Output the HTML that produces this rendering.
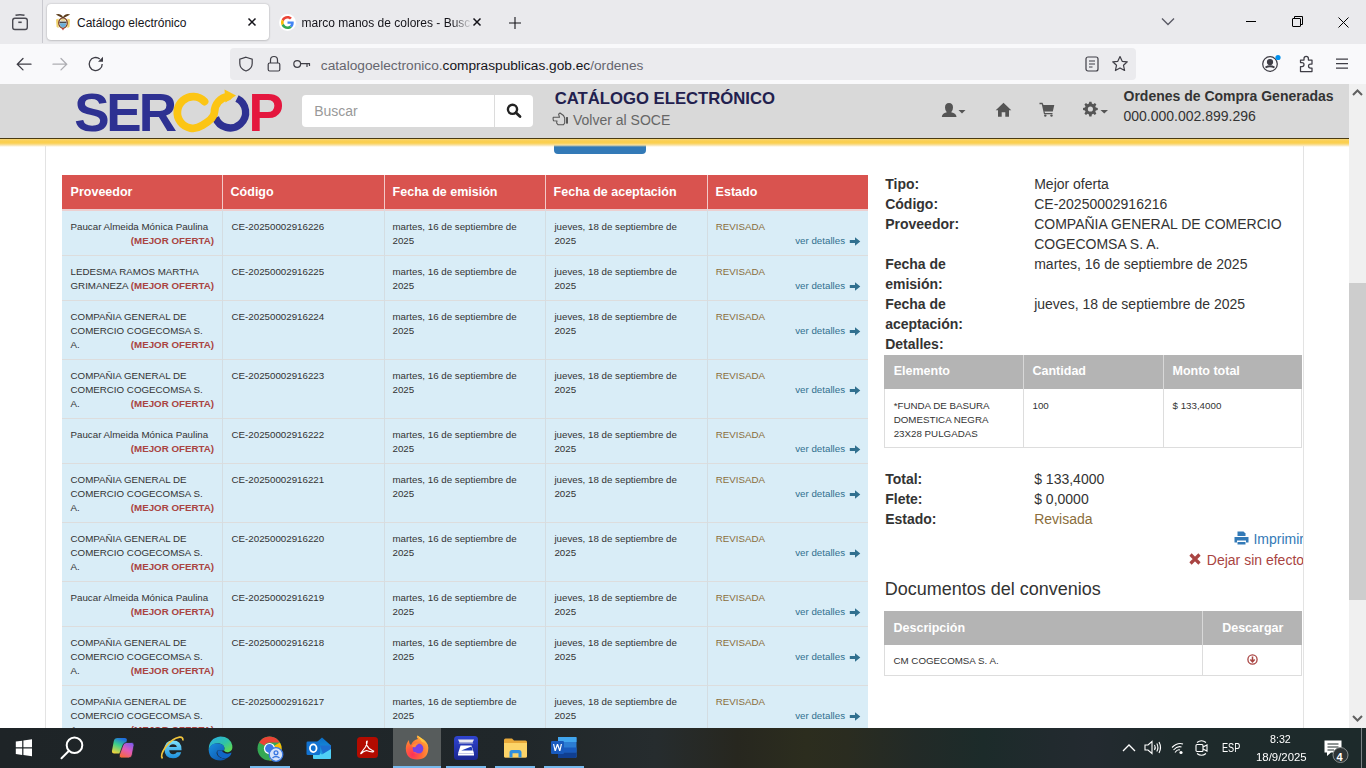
<!DOCTYPE html>
<html><head><meta charset="utf-8"><title>Catálogo electrónico</title>
<style>
html,body{margin:0;padding:0;width:1366px;height:768px;overflow:hidden;background:#fff;}
body{position:relative;font-family:"Liberation Sans",sans-serif;}
.t{position:absolute;white-space:nowrap;}
.r{position:absolute;}
.a{position:absolute;overflow:visible;}
</style></head><body>
<div class="r" style="left:0px;top:0px;width:1366px;height:44px;background:#eaeaed;"></div>
<div class="r" style="left:42px;top:0px;width:1px;height:43px;background:#c9c9cf;"></div>
<svg class="a" style="left:11px;top:13px" width="18" height="18" viewBox="0 0 18 18" fill="none" stroke="#4a4a52" stroke-width="1.4">
<path d="M4.5 2.3Q9 1.2 13.5 2.3"/><rect x="1.7" y="5.2" width="14.6" height="11.3" rx="2.2"/><path d="M7.3 9.3h3.4" stroke-width="1.6"/></svg>
<div class="r" style="left:47px;top:4px;width:222px;height:36px;background:#fff;border-radius:4px;box-shadow:0 0 2px rgba(0,0,0,.25),0 1px 2px rgba(0,0,0,.1);"></div>
<svg class="a" style="left:55px;top:13px" width="16" height="18" viewBox="55 13 16 18">
<path d="M56 19.5L58.6 18.5V28L56.6 27Z" fill="#f0d26a"/><path d="M70 19.5L67.4 18.5V28L69.4 27Z" fill="#f0d26a"/>
<ellipse cx="63" cy="23" rx="4.3" ry="5.2" fill="#f4f1e6" stroke="#7a3b1e" stroke-width="1.2"/>
<path d="M59.5 21.6H66.5V23.2H59.5Z" fill="#4a4a4a"/><path d="M59.6 23.2H66.4Q66 27.3 63 27.5Q60 27.3 59.6 23.2Z" fill="#6aaed8"/><path d="M61 19.2H65V20.6H61Z" fill="#e2cf7a"/>
<path d="M61.6 28L63 30.6L64.4 28Z" fill="#c0392b"/>
<path d="M55.8 14.6Q59.5 13.2 62.2 15.8L63 17.3L63.8 15.8Q66.5 13.2 70.2 14.6L66.5 16.6L63 18.3L59.5 16.6Z" fill="#5a3a1a"/></svg>
<div class="t " style="left:77.00px;top:15.04px;font-size:12px;line-height:16px;color:#15141a;font-weight:400;">Catálogo electrónico</div>
<svg class="a" style="left:247px;top:17px" width="10" height="10" viewBox="0 0 10 10" stroke="#15141a" stroke-width="1.5"><path d="M1.5 1.5L8.5 8.5M8.5 1.5L1.5 8.5"/></svg>
<div class="r" style="left:279px;top:14px;width:17px;height:17px;border-radius:50%;background:#fff"></div><svg class="a" style="left:281px;top:16px" width="13" height="13" viewBox="0 0 48 48">
<path fill="#EA4335" d="M24 9.5c3.54 0 6.71 1.22 9.21 3.6l6.85-6.85C35.9 2.38 30.47 0 24 0 14.62 0 6.51 5.38 2.56 13.22l7.98 6.19C12.43 13.72 17.74 9.5 24 9.5z"/>
<path fill="#4285F4" d="M46.98 24.55c0-1.57-.15-3.09-.38-4.55H24v9.02h12.94c-.58 2.96-2.26 5.48-4.78 7.18l7.73 6c4.51-4.18 7.09-10.36 7.09-17.65z"/>
<path fill="#FBBC05" d="M10.53 28.59c-.48-1.45-.76-2.99-.76-4.59s.27-3.14.76-4.59l-7.98-6.19C.92 16.46 0 20.12 0 24c0 3.88.92 7.54 2.56 10.78l7.97-6.19z"/>
<path fill="#34A853" d="M24 48c6.48 0 11.93-2.13 15.89-5.81l-7.73-6c-2.15 1.45-4.92 2.3-8.16 2.3-6.26 0-11.57-4.22-13.47-9.91l-7.98 6.19C6.51 42.62 14.62 48 24 48z"/></svg>
<div class="t " style="left:301.60px;top:15.04px;font-size:12px;line-height:16px;color:#15141a;font-weight:400;width:170px;overflow:hidden;-webkit-mask-image:linear-gradient(to right,#000 150px,transparent 170px);">marco manos de colores - Busca</div>
<svg class="a" style="left:472px;top:17px" width="10" height="10" viewBox="0 0 10 10" stroke="#15141a" stroke-width="1.5"><path d="M1.5 1.5L8.5 8.5M8.5 1.5L1.5 8.5"/></svg>
<svg class="a" style="left:508px;top:16px" width="14" height="14" viewBox="0 0 14 14" stroke="#15141a" stroke-width="1.1"><path d="M7 1V13M1 7H13"/></svg>
<svg class="a" style="left:1161px;top:17px" width="14" height="9" viewBox="0 0 14 9" fill="none" stroke="#5b5b66" stroke-width="1.4"><path d="M1 1.5L7 7.5L13 1.5"/></svg>
<div class="r" style="left:1246px;top:21px;width:10px;height:1px;background:#000;"></div>
<svg class="a" style="left:1292px;top:16px" width="11" height="11" viewBox="0 0 11 11" fill="none" stroke="#000" stroke-width="1"><rect x="0.5" y="2.5" width="8" height="8" rx="0.5"/><path d="M2.5 2.5V0.5H10.5V8.5H8.5"/></svg>
<svg class="a" style="left:1337.5px;top:16.5px" width="11" height="11" viewBox="0 0 11 11" fill="none" stroke="#000" stroke-width="1"><path d="M0.5 0.5L10.5 10.5M10.5 0.5L0.5 10.5"/></svg>
<div class="r" style="left:0px;top:44px;width:1366px;height:40px;background:#f9f9fb;"></div>
<svg class="a" style="left:16px;top:56px" width="16" height="16" viewBox="0 0 16 16" fill="none" stroke="#3f3e46" stroke-width="1.3" stroke-linecap="round"><path d="M15 8.2H2M7 2.5L1.3 8.2L7 13.9"/></svg>
<svg class="a" style="left:52px;top:56px" width="16" height="16" viewBox="0 0 16 16" fill="none" stroke="#aeaeb3" stroke-width="1.3" stroke-linecap="round"><path d="M1 8.2H14M9 2.5L14.7 8.2L9 13.9"/></svg>
<svg class="a" style="left:88px;top:56px" width="16" height="16" viewBox="0 0 16 16" fill="none" stroke="#3f3e46" stroke-width="1.3"><path d="M14.2 8A6.5 6.5 0 1 1 11.8 3"/><path d="M10 5.8L15 0.8V5.8Z" fill="#3f3e46" stroke="none"/></svg>
<div class="r" style="left:230px;top:48px;width:906px;height:32px;background:#ebebee;border-radius:4px;"></div>
<svg class="a" style="left:238px;top:56px" width="16" height="16" viewBox="0 0 16 16" fill="none" stroke="#3f3e46" stroke-width="1.2"><path d="M8 1.2L14.2 3.2V7.5C14.2 11 11.5 13.8 8 15C4.5 13.8 1.8 11 1.8 7.5V3.2Z"/></svg>
<svg class="a" style="left:266px;top:55px" width="16" height="17" viewBox="0 0 16 17" fill="none" stroke="#3f3e46" stroke-width="1.2"><path d="M4.5 8V5A3.5 3.5 0 0 1 11.5 5V8"/><rect x="2.2" y="8" width="11.6" height="8" rx="1.5"/></svg>
<svg class="a" style="left:293px;top:59px" width="18" height="10" viewBox="0 0 18 10" fill="none" stroke="#3f3e46" stroke-width="1.2"><circle cx="4.2" cy="5" r="3.4"/><path d="M7.6 4.6H17M14 4.6V8M16.5 4.6V7"/></svg>
<div class="t " style="left:320.80px;top:56.55px;font-size:13.7px;line-height:18px;color:#15141a;font-weight:400;"><span style="color:#66666e">catalogoelectronico.</span>compraspublicas.gob.ec<span style="color:#66666e">/ordenes</span></div>
<svg class="a" style="left:1085px;top:56px" width="14" height="16" viewBox="0 0 14 16" fill="none" stroke="#3f3e46" stroke-width="1.2"><rect x="1" y="1" width="12" height="14" rx="2"/><path d="M4 5H10M4 8H10M4 11H7.5"/></svg>
<svg class="a" style="left:1111px;top:55px" width="18" height="18" viewBox="0 0 18 18" fill="none" stroke="#3f3e46" stroke-width="1.2" stroke-linejoin="round"><path d="M9 1.5L11.2 6.3L16.3 6.8L12.5 10.3L13.6 15.5L9 12.9L4.4 15.5L5.5 10.3L1.7 6.8L6.8 6.3Z"/></svg>
<svg class="a" style="left:1261px;top:55px" width="20" height="18" viewBox="0 0 20 18" fill="none" stroke="#3f3e46" stroke-width="1.25"><circle cx="9" cy="9" r="7.3"/><circle cx="9" cy="7" r="2.5" fill="#3f3e46"/><path d="M4.5 12.5Q9 10 13.5 12.5" stroke-width="2"/><circle cx="17" cy="2.5" r="2.6" fill="#0090ed" stroke="none"/></svg>
<svg class="a" style="left:1299px;top:55px" width="16" height="18" viewBox="0 0 16 18" fill="none" stroke="#3f3e46" stroke-width="1.25" stroke-linejoin="round"><path d="M5 3.5A2.2 2.2 0 0 1 9.4 3.5V5H13V9H11.5A2 2 0 0 0 11.5 13H13V16.5H1.5V11.5H3A2 2 0 0 0 3 7.5H1.5V5H5Z"/></svg>
<svg class="a" style="left:1335px;top:57px" width="14" height="13" viewBox="0 0 14 13" stroke="#3f3e46" stroke-width="1.25"><path d="M1 2H13M1 6.5H13M1 11H13"/></svg>
<div class="r" style="left:0px;top:84px;width:1349px;height:644px;background:#fff;"></div>
<div class="r" style="left:1349px;top:84px;width:17px;height:644px;background:#f0f0f0;"></div>
<div class="r" style="left:1349px;top:283px;width:17px;height:317px;background:#cdcdcd;"></div>
<svg class="a" style="left:1352px;top:88px" width="11" height="9" viewBox="0 0 11 9" fill="none" stroke="#606060" stroke-width="2"><path d="M1 7L5.5 2.5L10 7"/></svg>
<svg class="a" style="left:1352px;top:714px" width="11" height="9" viewBox="0 0 11 9" fill="none" stroke="#606060" stroke-width="2"><path d="M1 2L5.5 6.5L10 2"/></svg>
<div class="r" style="left:45px;top:146px;width:1px;height:582px;background:#e3e3e3;"></div>
<div class="r" style="left:1303px;top:146px;width:1px;height:582px;background:#e3e3e3;"></div>
<div class="r" style="left:554px;top:130px;width:92px;height:24px;background:#337ab7;border-radius:0 0 4px 4px;"></div>
<div class="r" style="left:0px;top:84px;width:1349px;height:54px;background:#d9d9d9;"></div>
<div class="r" style="left:0px;top:138px;width:1349px;height:1px;background:#4a3b12;"></div>
<div class="r" style="left:0px;top:139px;width:1349px;height:8px;background:linear-gradient(#f6d57a 0px,#fbcf50 2px,#fbd050 4px,#f8e0a0 6px,rgba(255,255,255,0) 8px);"></div>
<svg class="a" style="left:70px;top:85px" width="220" height="50" viewBox="70 85 220 50">
<g font-family="Liberation Sans" font-weight="700" font-size="53">
<text x="74.3" y="131" fill="#2e3192">S</text>
<text x="106.2" y="131" fill="#2e3192">E</text>
<text x="138.8" y="131" fill="#2e3192">R</text>
<text x="248.5" y="131" fill="#e4173e">P</text>
</g>
<path d="M237 98.5 A15.5 15.5 0 1 1 215.5 117.5" fill="none" stroke="#2e3192" stroke-width="7.3"/>
<path d="M204.5 101.5 A15.8 15.8 0 1 0 201.9 125.6 C206.2 123.1 214.5 118 214.5 112 A15.5 15.5 0 0 1 228 96.6" fill="none" stroke="#fcc514" stroke-width="7.8" stroke-linecap="round"/>
<path d="M224.5 89.5 L236 95.5 L225.5 102.5 Z" fill="#fcc514"/>
</svg>
<div class="r" style="left:302px;top:95px;width:231px;height:32px;background:#fff;border-radius:4px;"></div>
<div class="r" style="left:494px;top:95px;width:1px;height:32px;background:#dcdcdc;"></div>
<div class="t " style="left:314.20px;top:101.85px;font-size:14px;line-height:18px;color:#999;font-weight:400;">Buscar</div>
<svg class="a" style="left:506px;top:103px" width="16" height="15" viewBox="0 0 16 15" fill="none" stroke="#222" stroke-width="2.4"><circle cx="6.5" cy="6.3" r="4.6"/><path d="M10 9.8L14 13.5" stroke-linecap="round" stroke-width="2.8"/></svg>
<div class="t " style="left:554.70px;top:87.71px;font-size:16.7px;line-height:22px;color:#22204e;font-weight:700;">CATÁLOGO ELECTRÓNICO</div>
<svg class="a" style="left:552px;top:112px" width="20" height="14" viewBox="0 0 20 14" fill="none" stroke="#555" stroke-width="1.1" stroke-linejoin="round"><path d="M1.2 5.3H7.5L6.6 2.2L8 1L11.5 3.5L12.7 6V11L11.5 12.7H6L4.6 11L5 9L1.5 8.7Q0.8 7 1.2 5.3Z"/><rect x="14" y="5.1" width="2" height="6.5" fill="#555" stroke="none"/></svg>
<div class="t " style="left:573.00px;top:111.15px;font-size:14px;line-height:18px;color:#666;font-weight:400;">Volver al SOCE</div>
<svg class="a" style="left:941px;top:102px" width="26" height="16" viewBox="0 0 26 16" fill="#555"><path d="M8 1Q12 1 12 5.5Q12 8.5 10.2 10.2Q15.5 11.5 15.5 15H0.8Q0.8 11.5 5.8 10.2Q4 8.5 4 5.5Q4 1 8 1Z"/><path d="M17.5 8H24.5L21 11.5Z"/></svg>
<svg class="a" style="left:995px;top:102px" width="17" height="15" viewBox="0 0 17 15" fill="#555"><path d="M8.5 0.8L16.3 8.2H14V14.7H10.3V10.3H6.7V14.7H3V8.2H0.7Z"/></svg>
<svg class="a" style="left:1039px;top:102px" width="16" height="15" viewBox="0 0 16 15" fill="#555"><path d="M0.5 0.8H3.5L4.5 3H15.3L13.8 9.5H5.5L6 11H13.5V12.3H5L2.8 2.2H0.5Z"/><circle cx="6.3" cy="13.6" r="1.2"/><circle cx="12.5" cy="13.6" r="1.2"/></svg>
<svg class="a" style="left:1083px;top:102px" width="26" height="15" viewBox="0 0 26 15" fill="#555"><path fill-rule="evenodd" d="M6.3 0.5H8.7L9.1 2.6L10.6 3.3L12.3 2L14 3.7L12.8 5.4L13.4 6.9L15.5 7.3V9.7L13.4 10.1L12.8 11.6L14 13.3L12.3 15L10.6 13.7L9.1 14.4L8.7 16.5H6.3L5.9 14.4L4.4 13.7L2.7 15L1 13.3L2.2 11.6L1.6 10.1L-0.5 9.7V7.3L1.6 6.9L2.2 5.4L1 3.7L2.7 2L4.4 3.3L5.9 2.6Z M7.5 5.7A2.8 2.8 0 1 0 7.5 11.3A2.8 2.8 0 1 0 7.5 5.7Z" transform="translate(0.5,-0.8) scale(0.92)"/><path d="M17.5 8H25L21.25 11.5Z"/></svg>
<div class="t " style="left:1123.50px;top:87.05px;font-size:14px;line-height:18px;color:#333;font-weight:700;">Ordenes de Compra Generadas</div>
<div class="t " style="left:1123.50px;top:106.65px;font-size:14px;line-height:18px;color:#333;font-weight:400;">000.000.002.899.296</div>
<div class="r" style="left:62px;top:175px;width:806px;height:34px;background:#d9534f;"></div>
<div class="r" style="left:222px;top:175px;width:1px;height:34px;background:#f3c9c8;"></div>
<div class="r" style="left:384px;top:175px;width:1px;height:34px;background:#f3c9c8;"></div>
<div class="r" style="left:545px;top:175px;width:1px;height:34px;background:#f3c9c8;"></div>
<div class="r" style="left:707px;top:175px;width:1px;height:34px;background:#f3c9c8;"></div>
<div class="t " style="left:70.60px;top:183.67px;font-size:12.5px;line-height:16px;color:#fff;font-weight:700;">Proveedor</div>
<div class="t " style="left:230.60px;top:183.67px;font-size:12.5px;line-height:16px;color:#fff;font-weight:700;">Código</div>
<div class="t " style="left:392.60px;top:183.67px;font-size:12.5px;line-height:16px;color:#fff;font-weight:700;">Fecha de emisión</div>
<div class="t " style="left:553.60px;top:183.67px;font-size:12.5px;line-height:16px;color:#fff;font-weight:700;">Fecha de aceptación</div>
<div class="t " style="left:715.60px;top:183.67px;font-size:12.5px;line-height:16px;color:#fff;font-weight:700;">Estado</div>
<div class="r" style="left:62px;top:209px;width:806px;height:46px;background:#d9edf7;"></div>
<div class="r" style="left:62px;top:209px;width:806px;height:2px;background:#eccfd0;"></div>
<div class="r" style="left:222px;top:209px;width:1px;height:46px;background:#d4dde2;"></div>
<div class="r" style="left:384px;top:209px;width:1px;height:46px;background:#d4dde2;"></div>
<div class="r" style="left:545px;top:209px;width:1px;height:46px;background:#d4dde2;"></div>
<div class="r" style="left:707px;top:209px;width:1px;height:46px;background:#d4dde2;"></div>
<div class="t " style="left:70.50px;top:220.22px;font-size:9.75px;line-height:14px;color:#333;font-weight:400;">Paucar Almeida Mónica Paulina</div>
<div class="t" style="left:70.5px;width:143.5px;text-align:right;top:233.80px;font-size:9.75px;line-height:14px"><span style="color:#a94442;font-weight:700">(MEJOR OFERTA)</span></div>
<div class="t " style="left:231.50px;top:220.22px;font-size:9.75px;line-height:14px;color:#333;font-weight:400;">CE-20250002916226</div>
<div class="t " style="left:392.50px;top:220.22px;font-size:9.75px;line-height:14px;color:#333;font-weight:400;">martes, 16 de septiembre de</div>
<div class="t " style="left:392.50px;top:234.22px;font-size:9.75px;line-height:14px;color:#333;font-weight:400;">2025</div>
<div class="t " style="left:554.40px;top:220.22px;font-size:9.75px;line-height:14px;color:#333;font-weight:400;">jueves, 18 de septiembre de</div>
<div class="t " style="left:554.40px;top:234.22px;font-size:9.75px;line-height:14px;color:#333;font-weight:400;">2025</div>
<div class="t " style="left:715.80px;top:220.22px;font-size:9.75px;line-height:14px;color:#8a6d3b;font-weight:400;">REVISADA</div>
<div class="t " style="left:795.20px;top:234.22px;font-size:9.75px;line-height:14px;color:#31708f;font-weight:400;">ver detalles</div>
<svg class="a" style="left:849px;top:237.10px" width="12" height="9" viewBox="0 0 12 9" fill="#31708f"><path d="M0.8 3H6V0.3L11.3 4.5L6 8.7V6H0.8Z"/></svg>
<div class="r" style="left:62px;top:255px;width:806px;height:45px;background:#d9edf7;"></div>
<div class="r" style="left:62px;top:255px;width:806px;height:1px;background:#dddddd;"></div>
<div class="r" style="left:222px;top:255px;width:1px;height:45px;background:#d4dde2;"></div>
<div class="r" style="left:384px;top:255px;width:1px;height:45px;background:#d4dde2;"></div>
<div class="r" style="left:545px;top:255px;width:1px;height:45px;background:#d4dde2;"></div>
<div class="r" style="left:707px;top:255px;width:1px;height:45px;background:#d4dde2;"></div>
<div class="t " style="left:70.50px;top:265.22px;font-size:9.75px;line-height:14px;color:#333;font-weight:400;">LEDESMA RAMOS MARTHA</div>
<div class="t " style="left:70.50px;top:279.22px;font-size:9.75px;line-height:14px;color:#333;font-weight:400;">GRIMANEZA</div>
<div class="t" style="left:70.5px;width:143.5px;text-align:right;top:278.80px;font-size:9.75px;line-height:14px"><span style="color:#a94442;font-weight:700">(MEJOR OFERTA)</span></div>
<div class="t " style="left:231.50px;top:265.22px;font-size:9.75px;line-height:14px;color:#333;font-weight:400;">CE-20250002916225</div>
<div class="t " style="left:392.50px;top:265.22px;font-size:9.75px;line-height:14px;color:#333;font-weight:400;">martes, 16 de septiembre de</div>
<div class="t " style="left:392.50px;top:279.22px;font-size:9.75px;line-height:14px;color:#333;font-weight:400;">2025</div>
<div class="t " style="left:554.40px;top:265.22px;font-size:9.75px;line-height:14px;color:#333;font-weight:400;">jueves, 18 de septiembre de</div>
<div class="t " style="left:554.40px;top:279.22px;font-size:9.75px;line-height:14px;color:#333;font-weight:400;">2025</div>
<div class="t " style="left:715.80px;top:265.22px;font-size:9.75px;line-height:14px;color:#8a6d3b;font-weight:400;">REVISADA</div>
<div class="t " style="left:795.20px;top:279.22px;font-size:9.75px;line-height:14px;color:#31708f;font-weight:400;">ver detalles</div>
<svg class="a" style="left:849px;top:282.10px" width="12" height="9" viewBox="0 0 12 9" fill="#31708f"><path d="M0.8 3H6V0.3L11.3 4.5L6 8.7V6H0.8Z"/></svg>
<div class="r" style="left:62px;top:300px;width:806px;height:59px;background:#d9edf7;"></div>
<div class="r" style="left:62px;top:300px;width:806px;height:1px;background:#dddddd;"></div>
<div class="r" style="left:222px;top:300px;width:1px;height:59px;background:#d4dde2;"></div>
<div class="r" style="left:384px;top:300px;width:1px;height:59px;background:#d4dde2;"></div>
<div class="r" style="left:545px;top:300px;width:1px;height:59px;background:#d4dde2;"></div>
<div class="r" style="left:707px;top:300px;width:1px;height:59px;background:#d4dde2;"></div>
<div class="t " style="left:70.50px;top:310.22px;font-size:9.75px;line-height:14px;color:#333;font-weight:400;">COMPAÑIA GENERAL DE</div>
<div class="t " style="left:70.50px;top:324.22px;font-size:9.75px;line-height:14px;color:#333;font-weight:400;">COMERCIO COGECOMSA S.</div>
<div class="t " style="left:70.50px;top:338.22px;font-size:9.75px;line-height:14px;color:#333;font-weight:400;">A.</div>
<div class="t" style="left:70.5px;width:143.5px;text-align:right;top:337.80px;font-size:9.75px;line-height:14px"><span style="color:#a94442;font-weight:700">(MEJOR OFERTA)</span></div>
<div class="t " style="left:231.50px;top:310.22px;font-size:9.75px;line-height:14px;color:#333;font-weight:400;">CE-20250002916224</div>
<div class="t " style="left:392.50px;top:310.22px;font-size:9.75px;line-height:14px;color:#333;font-weight:400;">martes, 16 de septiembre de</div>
<div class="t " style="left:392.50px;top:324.22px;font-size:9.75px;line-height:14px;color:#333;font-weight:400;">2025</div>
<div class="t " style="left:554.40px;top:310.22px;font-size:9.75px;line-height:14px;color:#333;font-weight:400;">jueves, 18 de septiembre de</div>
<div class="t " style="left:554.40px;top:324.22px;font-size:9.75px;line-height:14px;color:#333;font-weight:400;">2025</div>
<div class="t " style="left:715.80px;top:310.22px;font-size:9.75px;line-height:14px;color:#8a6d3b;font-weight:400;">REVISADA</div>
<div class="t " style="left:795.20px;top:324.22px;font-size:9.75px;line-height:14px;color:#31708f;font-weight:400;">ver detalles</div>
<svg class="a" style="left:849px;top:327.10px" width="12" height="9" viewBox="0 0 12 9" fill="#31708f"><path d="M0.8 3H6V0.3L11.3 4.5L6 8.7V6H0.8Z"/></svg>
<div class="r" style="left:62px;top:359px;width:806px;height:59px;background:#d9edf7;"></div>
<div class="r" style="left:62px;top:359px;width:806px;height:1px;background:#dddddd;"></div>
<div class="r" style="left:222px;top:359px;width:1px;height:59px;background:#d4dde2;"></div>
<div class="r" style="left:384px;top:359px;width:1px;height:59px;background:#d4dde2;"></div>
<div class="r" style="left:545px;top:359px;width:1px;height:59px;background:#d4dde2;"></div>
<div class="r" style="left:707px;top:359px;width:1px;height:59px;background:#d4dde2;"></div>
<div class="t " style="left:70.50px;top:369.22px;font-size:9.75px;line-height:14px;color:#333;font-weight:400;">COMPAÑIA GENERAL DE</div>
<div class="t " style="left:70.50px;top:383.22px;font-size:9.75px;line-height:14px;color:#333;font-weight:400;">COMERCIO COGECOMSA S.</div>
<div class="t " style="left:70.50px;top:397.22px;font-size:9.75px;line-height:14px;color:#333;font-weight:400;">A.</div>
<div class="t" style="left:70.5px;width:143.5px;text-align:right;top:396.80px;font-size:9.75px;line-height:14px"><span style="color:#a94442;font-weight:700">(MEJOR OFERTA)</span></div>
<div class="t " style="left:231.50px;top:369.22px;font-size:9.75px;line-height:14px;color:#333;font-weight:400;">CE-20250002916223</div>
<div class="t " style="left:392.50px;top:369.22px;font-size:9.75px;line-height:14px;color:#333;font-weight:400;">martes, 16 de septiembre de</div>
<div class="t " style="left:392.50px;top:383.22px;font-size:9.75px;line-height:14px;color:#333;font-weight:400;">2025</div>
<div class="t " style="left:554.40px;top:369.22px;font-size:9.75px;line-height:14px;color:#333;font-weight:400;">jueves, 18 de septiembre de</div>
<div class="t " style="left:554.40px;top:383.22px;font-size:9.75px;line-height:14px;color:#333;font-weight:400;">2025</div>
<div class="t " style="left:715.80px;top:369.22px;font-size:9.75px;line-height:14px;color:#8a6d3b;font-weight:400;">REVISADA</div>
<div class="t " style="left:795.20px;top:383.22px;font-size:9.75px;line-height:14px;color:#31708f;font-weight:400;">ver detalles</div>
<svg class="a" style="left:849px;top:386.10px" width="12" height="9" viewBox="0 0 12 9" fill="#31708f"><path d="M0.8 3H6V0.3L11.3 4.5L6 8.7V6H0.8Z"/></svg>
<div class="r" style="left:62px;top:418px;width:806px;height:45px;background:#d9edf7;"></div>
<div class="r" style="left:62px;top:418px;width:806px;height:1px;background:#dddddd;"></div>
<div class="r" style="left:222px;top:418px;width:1px;height:45px;background:#d4dde2;"></div>
<div class="r" style="left:384px;top:418px;width:1px;height:45px;background:#d4dde2;"></div>
<div class="r" style="left:545px;top:418px;width:1px;height:45px;background:#d4dde2;"></div>
<div class="r" style="left:707px;top:418px;width:1px;height:45px;background:#d4dde2;"></div>
<div class="t " style="left:70.50px;top:428.22px;font-size:9.75px;line-height:14px;color:#333;font-weight:400;">Paucar Almeida Mónica Paulina</div>
<div class="t" style="left:70.5px;width:143.5px;text-align:right;top:441.80px;font-size:9.75px;line-height:14px"><span style="color:#a94442;font-weight:700">(MEJOR OFERTA)</span></div>
<div class="t " style="left:231.50px;top:428.22px;font-size:9.75px;line-height:14px;color:#333;font-weight:400;">CE-20250002916222</div>
<div class="t " style="left:392.50px;top:428.22px;font-size:9.75px;line-height:14px;color:#333;font-weight:400;">martes, 16 de septiembre de</div>
<div class="t " style="left:392.50px;top:442.22px;font-size:9.75px;line-height:14px;color:#333;font-weight:400;">2025</div>
<div class="t " style="left:554.40px;top:428.22px;font-size:9.75px;line-height:14px;color:#333;font-weight:400;">jueves, 18 de septiembre de</div>
<div class="t " style="left:554.40px;top:442.22px;font-size:9.75px;line-height:14px;color:#333;font-weight:400;">2025</div>
<div class="t " style="left:715.80px;top:428.22px;font-size:9.75px;line-height:14px;color:#8a6d3b;font-weight:400;">REVISADA</div>
<div class="t " style="left:795.20px;top:442.22px;font-size:9.75px;line-height:14px;color:#31708f;font-weight:400;">ver detalles</div>
<svg class="a" style="left:849px;top:445.10px" width="12" height="9" viewBox="0 0 12 9" fill="#31708f"><path d="M0.8 3H6V0.3L11.3 4.5L6 8.7V6H0.8Z"/></svg>
<div class="r" style="left:62px;top:463px;width:806px;height:59px;background:#d9edf7;"></div>
<div class="r" style="left:62px;top:463px;width:806px;height:1px;background:#dddddd;"></div>
<div class="r" style="left:222px;top:463px;width:1px;height:59px;background:#d4dde2;"></div>
<div class="r" style="left:384px;top:463px;width:1px;height:59px;background:#d4dde2;"></div>
<div class="r" style="left:545px;top:463px;width:1px;height:59px;background:#d4dde2;"></div>
<div class="r" style="left:707px;top:463px;width:1px;height:59px;background:#d4dde2;"></div>
<div class="t " style="left:70.50px;top:473.22px;font-size:9.75px;line-height:14px;color:#333;font-weight:400;">COMPAÑIA GENERAL DE</div>
<div class="t " style="left:70.50px;top:487.22px;font-size:9.75px;line-height:14px;color:#333;font-weight:400;">COMERCIO COGECOMSA S.</div>
<div class="t " style="left:70.50px;top:501.22px;font-size:9.75px;line-height:14px;color:#333;font-weight:400;">A.</div>
<div class="t" style="left:70.5px;width:143.5px;text-align:right;top:500.80px;font-size:9.75px;line-height:14px"><span style="color:#a94442;font-weight:700">(MEJOR OFERTA)</span></div>
<div class="t " style="left:231.50px;top:473.22px;font-size:9.75px;line-height:14px;color:#333;font-weight:400;">CE-20250002916221</div>
<div class="t " style="left:392.50px;top:473.22px;font-size:9.75px;line-height:14px;color:#333;font-weight:400;">martes, 16 de septiembre de</div>
<div class="t " style="left:392.50px;top:487.22px;font-size:9.75px;line-height:14px;color:#333;font-weight:400;">2025</div>
<div class="t " style="left:554.40px;top:473.22px;font-size:9.75px;line-height:14px;color:#333;font-weight:400;">jueves, 18 de septiembre de</div>
<div class="t " style="left:554.40px;top:487.22px;font-size:9.75px;line-height:14px;color:#333;font-weight:400;">2025</div>
<div class="t " style="left:715.80px;top:473.22px;font-size:9.75px;line-height:14px;color:#8a6d3b;font-weight:400;">REVISADA</div>
<div class="t " style="left:795.20px;top:487.22px;font-size:9.75px;line-height:14px;color:#31708f;font-weight:400;">ver detalles</div>
<svg class="a" style="left:849px;top:490.10px" width="12" height="9" viewBox="0 0 12 9" fill="#31708f"><path d="M0.8 3H6V0.3L11.3 4.5L6 8.7V6H0.8Z"/></svg>
<div class="r" style="left:62px;top:522px;width:806px;height:59px;background:#d9edf7;"></div>
<div class="r" style="left:62px;top:522px;width:806px;height:1px;background:#dddddd;"></div>
<div class="r" style="left:222px;top:522px;width:1px;height:59px;background:#d4dde2;"></div>
<div class="r" style="left:384px;top:522px;width:1px;height:59px;background:#d4dde2;"></div>
<div class="r" style="left:545px;top:522px;width:1px;height:59px;background:#d4dde2;"></div>
<div class="r" style="left:707px;top:522px;width:1px;height:59px;background:#d4dde2;"></div>
<div class="t " style="left:70.50px;top:532.22px;font-size:9.75px;line-height:14px;color:#333;font-weight:400;">COMPAÑIA GENERAL DE</div>
<div class="t " style="left:70.50px;top:546.22px;font-size:9.75px;line-height:14px;color:#333;font-weight:400;">COMERCIO COGECOMSA S.</div>
<div class="t " style="left:70.50px;top:560.22px;font-size:9.75px;line-height:14px;color:#333;font-weight:400;">A.</div>
<div class="t" style="left:70.5px;width:143.5px;text-align:right;top:559.80px;font-size:9.75px;line-height:14px"><span style="color:#a94442;font-weight:700">(MEJOR OFERTA)</span></div>
<div class="t " style="left:231.50px;top:532.22px;font-size:9.75px;line-height:14px;color:#333;font-weight:400;">CE-20250002916220</div>
<div class="t " style="left:392.50px;top:532.22px;font-size:9.75px;line-height:14px;color:#333;font-weight:400;">martes, 16 de septiembre de</div>
<div class="t " style="left:392.50px;top:546.22px;font-size:9.75px;line-height:14px;color:#333;font-weight:400;">2025</div>
<div class="t " style="left:554.40px;top:532.22px;font-size:9.75px;line-height:14px;color:#333;font-weight:400;">jueves, 18 de septiembre de</div>
<div class="t " style="left:554.40px;top:546.22px;font-size:9.75px;line-height:14px;color:#333;font-weight:400;">2025</div>
<div class="t " style="left:715.80px;top:532.22px;font-size:9.75px;line-height:14px;color:#8a6d3b;font-weight:400;">REVISADA</div>
<div class="t " style="left:795.20px;top:546.22px;font-size:9.75px;line-height:14px;color:#31708f;font-weight:400;">ver detalles</div>
<svg class="a" style="left:849px;top:549.10px" width="12" height="9" viewBox="0 0 12 9" fill="#31708f"><path d="M0.8 3H6V0.3L11.3 4.5L6 8.7V6H0.8Z"/></svg>
<div class="r" style="left:62px;top:581px;width:806px;height:45px;background:#d9edf7;"></div>
<div class="r" style="left:62px;top:581px;width:806px;height:1px;background:#dddddd;"></div>
<div class="r" style="left:222px;top:581px;width:1px;height:45px;background:#d4dde2;"></div>
<div class="r" style="left:384px;top:581px;width:1px;height:45px;background:#d4dde2;"></div>
<div class="r" style="left:545px;top:581px;width:1px;height:45px;background:#d4dde2;"></div>
<div class="r" style="left:707px;top:581px;width:1px;height:45px;background:#d4dde2;"></div>
<div class="t " style="left:70.50px;top:591.22px;font-size:9.75px;line-height:14px;color:#333;font-weight:400;">Paucar Almeida Mónica Paulina</div>
<div class="t" style="left:70.5px;width:143.5px;text-align:right;top:604.80px;font-size:9.75px;line-height:14px"><span style="color:#a94442;font-weight:700">(MEJOR OFERTA)</span></div>
<div class="t " style="left:231.50px;top:591.22px;font-size:9.75px;line-height:14px;color:#333;font-weight:400;">CE-20250002916219</div>
<div class="t " style="left:392.50px;top:591.22px;font-size:9.75px;line-height:14px;color:#333;font-weight:400;">martes, 16 de septiembre de</div>
<div class="t " style="left:392.50px;top:605.22px;font-size:9.75px;line-height:14px;color:#333;font-weight:400;">2025</div>
<div class="t " style="left:554.40px;top:591.22px;font-size:9.75px;line-height:14px;color:#333;font-weight:400;">jueves, 18 de septiembre de</div>
<div class="t " style="left:554.40px;top:605.22px;font-size:9.75px;line-height:14px;color:#333;font-weight:400;">2025</div>
<div class="t " style="left:715.80px;top:591.22px;font-size:9.75px;line-height:14px;color:#8a6d3b;font-weight:400;">REVISADA</div>
<div class="t " style="left:795.20px;top:605.22px;font-size:9.75px;line-height:14px;color:#31708f;font-weight:400;">ver detalles</div>
<svg class="a" style="left:849px;top:608.10px" width="12" height="9" viewBox="0 0 12 9" fill="#31708f"><path d="M0.8 3H6V0.3L11.3 4.5L6 8.7V6H0.8Z"/></svg>
<div class="r" style="left:62px;top:626px;width:806px;height:59px;background:#d9edf7;"></div>
<div class="r" style="left:62px;top:626px;width:806px;height:1px;background:#dddddd;"></div>
<div class="r" style="left:222px;top:626px;width:1px;height:59px;background:#d4dde2;"></div>
<div class="r" style="left:384px;top:626px;width:1px;height:59px;background:#d4dde2;"></div>
<div class="r" style="left:545px;top:626px;width:1px;height:59px;background:#d4dde2;"></div>
<div class="r" style="left:707px;top:626px;width:1px;height:59px;background:#d4dde2;"></div>
<div class="t " style="left:70.50px;top:636.22px;font-size:9.75px;line-height:14px;color:#333;font-weight:400;">COMPAÑIA GENERAL DE</div>
<div class="t " style="left:70.50px;top:650.22px;font-size:9.75px;line-height:14px;color:#333;font-weight:400;">COMERCIO COGECOMSA S.</div>
<div class="t " style="left:70.50px;top:664.22px;font-size:9.75px;line-height:14px;color:#333;font-weight:400;">A.</div>
<div class="t" style="left:70.5px;width:143.5px;text-align:right;top:663.80px;font-size:9.75px;line-height:14px"><span style="color:#a94442;font-weight:700">(MEJOR OFERTA)</span></div>
<div class="t " style="left:231.50px;top:636.22px;font-size:9.75px;line-height:14px;color:#333;font-weight:400;">CE-20250002916218</div>
<div class="t " style="left:392.50px;top:636.22px;font-size:9.75px;line-height:14px;color:#333;font-weight:400;">martes, 16 de septiembre de</div>
<div class="t " style="left:392.50px;top:650.22px;font-size:9.75px;line-height:14px;color:#333;font-weight:400;">2025</div>
<div class="t " style="left:554.40px;top:636.22px;font-size:9.75px;line-height:14px;color:#333;font-weight:400;">jueves, 18 de septiembre de</div>
<div class="t " style="left:554.40px;top:650.22px;font-size:9.75px;line-height:14px;color:#333;font-weight:400;">2025</div>
<div class="t " style="left:715.80px;top:636.22px;font-size:9.75px;line-height:14px;color:#8a6d3b;font-weight:400;">REVISADA</div>
<div class="t " style="left:795.20px;top:650.22px;font-size:9.75px;line-height:14px;color:#31708f;font-weight:400;">ver detalles</div>
<svg class="a" style="left:849px;top:653.10px" width="12" height="9" viewBox="0 0 12 9" fill="#31708f"><path d="M0.8 3H6V0.3L11.3 4.5L6 8.7V6H0.8Z"/></svg>
<div class="r" style="left:62px;top:685px;width:806px;height:59px;background:#d9edf7;"></div>
<div class="r" style="left:62px;top:685px;width:806px;height:1px;background:#dddddd;"></div>
<div class="r" style="left:222px;top:685px;width:1px;height:59px;background:#d4dde2;"></div>
<div class="r" style="left:384px;top:685px;width:1px;height:59px;background:#d4dde2;"></div>
<div class="r" style="left:545px;top:685px;width:1px;height:59px;background:#d4dde2;"></div>
<div class="r" style="left:707px;top:685px;width:1px;height:59px;background:#d4dde2;"></div>
<div class="t " style="left:70.50px;top:695.22px;font-size:9.75px;line-height:14px;color:#333;font-weight:400;">COMPAÑIA GENERAL DE</div>
<div class="t " style="left:70.50px;top:709.22px;font-size:9.75px;line-height:14px;color:#333;font-weight:400;">COMERCIO COGECOMSA S.</div>
<div class="t " style="left:70.50px;top:723.22px;font-size:9.75px;line-height:14px;color:#333;font-weight:400;">A.</div>
<div class="t" style="left:70.5px;width:143.5px;text-align:right;top:722.80px;font-size:9.75px;line-height:14px"><span style="color:#a94442;font-weight:700">(MEJOR OFERTA)</span></div>
<div class="t " style="left:231.50px;top:695.22px;font-size:9.75px;line-height:14px;color:#333;font-weight:400;">CE-20250002916217</div>
<div class="t " style="left:392.50px;top:695.22px;font-size:9.75px;line-height:14px;color:#333;font-weight:400;">martes, 16 de septiembre de</div>
<div class="t " style="left:392.50px;top:709.22px;font-size:9.75px;line-height:14px;color:#333;font-weight:400;">2025</div>
<div class="t " style="left:554.40px;top:695.22px;font-size:9.75px;line-height:14px;color:#333;font-weight:400;">jueves, 18 de septiembre de</div>
<div class="t " style="left:554.40px;top:709.22px;font-size:9.75px;line-height:14px;color:#333;font-weight:400;">2025</div>
<div class="t " style="left:715.80px;top:695.22px;font-size:9.75px;line-height:14px;color:#8a6d3b;font-weight:400;">REVISADA</div>
<div class="t " style="left:795.20px;top:709.22px;font-size:9.75px;line-height:14px;color:#31708f;font-weight:400;">ver detalles</div>
<svg class="a" style="left:849px;top:712.10px" width="12" height="9" viewBox="0 0 12 9" fill="#31708f"><path d="M0.8 3H6V0.3L11.3 4.5L6 8.7V6H0.8Z"/></svg>
<div class="t " style="left:885.20px;top:175.15px;font-size:14px;line-height:18px;color:#333;font-weight:700;">Tipo:</div>
<div class="t " style="left:885.20px;top:195.15px;font-size:14px;line-height:18px;color:#333;font-weight:700;">Código:</div>
<div class="t " style="left:885.20px;top:215.15px;font-size:14px;line-height:18px;color:#333;font-weight:700;">Proveedor:</div>
<div class="t " style="left:885.20px;top:255.15px;font-size:14px;line-height:18px;color:#333;font-weight:700;">Fecha de</div>
<div class="t " style="left:885.20px;top:275.15px;font-size:14px;line-height:18px;color:#333;font-weight:700;">emisión:</div>
<div class="t " style="left:885.20px;top:295.15px;font-size:14px;line-height:18px;color:#333;font-weight:700;">Fecha de</div>
<div class="t " style="left:885.20px;top:315.15px;font-size:14px;line-height:18px;color:#333;font-weight:700;">aceptación:</div>
<div class="t " style="left:885.20px;top:335.15px;font-size:14px;line-height:18px;color:#333;font-weight:700;">Detalles:</div>
<div class="t " style="left:1034.20px;top:175.15px;font-size:14px;line-height:18px;color:#333;font-weight:400;">Mejor oferta</div>
<div class="t " style="left:1034.20px;top:195.15px;font-size:14px;line-height:18px;color:#333;font-weight:400;">CE-20250002916216</div>
<div class="t " style="left:1034.20px;top:215.15px;font-size:14px;line-height:18px;color:#333;font-weight:400;">COMPAÑIA GENERAL DE COMERCIO</div>
<div class="t " style="left:1034.20px;top:235.15px;font-size:14px;line-height:18px;color:#333;font-weight:400;">COGECOMSA S. A.</div>
<div class="t " style="left:1034.20px;top:255.15px;font-size:14px;line-height:18px;color:#333;font-weight:400;">martes, 16 de septiembre de 2025</div>
<div class="t " style="left:1034.20px;top:295.15px;font-size:14px;line-height:18px;color:#333;font-weight:400;">jueves, 18 de septiembre de 2025</div>
<div class="r" style="left:884px;top:355px;width:418px;height:34px;background:#b4b4b4;"></div>
<div class="r" style="left:1023px;top:355px;width:1px;height:34px;background:#d8d8d8;"></div>
<div class="r" style="left:1163px;top:355px;width:1px;height:34px;background:#d8d8d8;"></div>
<div class="r" style="left:884px;top:389px;width:418px;height:59px;background:#fff;box-sizing:border-box;border:1px solid #dddddd;border-top:0;"></div>
<div class="r" style="left:1023px;top:389px;width:1px;height:59px;background:#dddddd;"></div>
<div class="r" style="left:1163px;top:389px;width:1px;height:59px;background:#dddddd;"></div>
<div class="t " style="left:893.70px;top:363.37px;font-size:12.5px;line-height:16px;color:#fff;font-weight:700;">Elemento</div>
<div class="t " style="left:1032.50px;top:363.37px;font-size:12.5px;line-height:16px;color:#fff;font-weight:700;">Cantidad</div>
<div class="t " style="left:1172.50px;top:363.37px;font-size:12.5px;line-height:16px;color:#fff;font-weight:700;">Monto total</div>
<div class="t " style="left:893.70px;top:398.62px;font-size:9.75px;line-height:14px;color:#333;font-weight:400;">*FUNDA DE BASURA</div>
<div class="t " style="left:893.70px;top:412.62px;font-size:9.75px;line-height:14px;color:#333;font-weight:400;">DOMESTICA NEGRA</div>
<div class="t " style="left:893.70px;top:426.62px;font-size:9.75px;line-height:14px;color:#333;font-weight:400;">23X28 PULGADAS</div>
<div class="t " style="left:1032.50px;top:398.62px;font-size:9.75px;line-height:14px;color:#333;font-weight:400;">100</div>
<div class="t " style="left:1172.50px;top:398.62px;font-size:9.75px;line-height:14px;color:#333;font-weight:400;">$ 133,4000</div>
<div class="t " style="left:885.20px;top:470.15px;font-size:14px;line-height:18px;color:#333;font-weight:700;">Total:</div>
<div class="t " style="left:885.20px;top:490.15px;font-size:14px;line-height:18px;color:#333;font-weight:700;">Flete:</div>
<div class="t " style="left:885.20px;top:510.15px;font-size:14px;line-height:18px;color:#333;font-weight:700;">Estado:</div>
<div class="t " style="left:1034.20px;top:470.15px;font-size:14px;line-height:18px;color:#333;font-weight:400;">$ 133,4000</div>
<div class="t " style="left:1034.20px;top:490.15px;font-size:14px;line-height:18px;color:#333;font-weight:400;">$ 0,0000</div>
<div class="t " style="left:1034.20px;top:510.15px;font-size:14px;line-height:18px;color:#8a6d3b;font-weight:400;">Revisada</div>
<svg class="a" style="left:1234px;top:531px" width="15" height="14" viewBox="0 0 15 14" fill="#337ab7"><path d="M3.5 0.5H9.5L11.5 2.5V5H3.5Z"/><path d="M0.5 6H14.5V11.5H12V9.5H3V11.5H0.5Z"/><rect x="3.5" y="11" width="8" height="2.5"/></svg>
<div class="t " style="left:1253.40px;top:530.15px;font-size:14px;line-height:18px;color:#337ab7;font-weight:400;width:49.6px;overflow:hidden;">Imprimir</div>
<svg class="a" style="left:1189px;top:553px" width="12" height="12" viewBox="0 0 12 12" stroke="#a94442" stroke-width="3.2"><path d="M1.5 1.5L10.5 10.5M10.5 1.5L1.5 10.5"/></svg>
<div class="t " style="left:1206.80px;top:550.75px;font-size:14px;line-height:18px;color:#a94442;font-weight:400;width:96.2px;overflow:hidden;">Dejar sin efecto</div>
<div class="t " style="left:884.70px;top:578.26px;font-size:18px;line-height:23px;color:#333;font-weight:400;">Documentos del convenios</div>
<div class="r" style="left:884px;top:611px;width:418px;height:34px;background:#b4b4b4;"></div>
<div class="r" style="left:1202px;top:611px;width:1px;height:34px;background:#d8d8d8;"></div>
<div class="r" style="left:884px;top:645px;width:418px;height:31px;background:#fff;box-sizing:border-box;border:1px solid #dddddd;border-top:0;"></div>
<div class="r" style="left:1202px;top:645px;width:1px;height:31px;background:#dddddd;"></div>
<div class="t " style="left:893.50px;top:619.67px;font-size:12.5px;line-height:16px;color:#fff;font-weight:700;">Descripción</div>
<div class="t " style="left:1222.20px;top:619.67px;font-size:12.5px;line-height:16px;color:#fff;font-weight:700;">Descargar</div>
<div class="t " style="left:893.50px;top:653.62px;font-size:9.75px;line-height:14px;color:#333;font-weight:400;">CM COGECOMSA S. A.</div>
<svg class="a" style="left:1247px;top:654px" width="11" height="11" viewBox="0 0 11 11" fill="none" stroke="#a94442" stroke-width="1.3"><circle cx="5.5" cy="5.5" r="4.6"/><path d="M5.5 2.5V7.5M3.3 5.5L5.5 7.8L7.7 5.5" stroke-width="1.5"/></svg>
<div class="r" style="left:0px;top:728px;width:1366px;height:40px;background:linear-gradient(90deg,#1e2427 0%,#20272a 38%,#262c2e 48%,#27271f 54%,#2c2d1e 59%,#2a2c20 62%,#222a27 67%,#1c2b2a 72%,#212a2e 77%,#232a30 80%,#1e2a2b 86%,#1d2a2b 100%);"></div>
<svg class="a" style="left:15px;top:739px" width="18" height="18" viewBox="0 0 18 18" fill="#fff"><path d="M0.8 2.6L7.2 1.7V8.2H0.8Z"/><path d="M8.4 1.5L17 0.3V8.2H8.4Z"/><path d="M0.8 9.4H7.2V15.9L0.8 15Z"/><path d="M8.4 9.4H17V17.3L8.4 16.1Z"/></svg>
<svg class="a" style="left:60px;top:736px" width="24" height="24" viewBox="0 0 24 24" fill="none" stroke="#fff" stroke-width="2"><circle cx="14.5" cy="9.3" r="7.8"/><path d="M9 14.8L1.5 22.3" stroke-linecap="round"/></svg>
<svg class="a" style="left:111px;top:737px" width="24" height="22" viewBox="0 0 24 22">
<defs><linearGradient id="cp1" x1="0.6" y1="0" x2="0.2" y2="1"><stop offset="0" stop-color="#1f6fe0"/><stop offset=".45" stop-color="#3ccf8a"/><stop offset="1" stop-color="#f6d43a"/></linearGradient>
<linearGradient id="cp2" x1="0.8" y1="0" x2="0.3" y2="1"><stop offset="0" stop-color="#7a5cf0"/><stop offset=".5" stop-color="#e15bb8"/><stop offset="1" stop-color="#f5683a"/></linearGradient></defs>
<path d="M6.5 1H13.5Q16.5 1 15.7 4L12 14Q11 16.5 8.5 16.5H3.2Q0.5 16.5 1 13.5L2.8 4Q3.4 1 6.5 1Z" fill="url(#cp1)"/>
<path d="M15.5 5.5H20.8Q23.5 5.5 23 8.5L21.2 18Q20.6 21 17.5 21H10.5Q7.5 21 8.3 18L12 8Q13 5.5 15.5 5.5Z" fill="url(#cp2)" stroke="#1d2427" stroke-width="0.8"/></svg>
<svg class="a" style="left:160px;top:736px" width="24" height="24" viewBox="0 0 24 24">
<defs><linearGradient id="ie1" x1="0" y1="0" x2="0" y2="1"><stop offset="0" stop-color="#7fe3fb"/><stop offset="1" stop-color="#1d8fdc"/></linearGradient></defs>
<path d="M13 4.5Q21.5 4.5 21.5 13.5V14.3H9.2Q9.6 18.2 13.2 18.2Q15.8 18.2 16.8 16.3H21.2Q19.6 22.3 13 22.3Q4.5 22.3 4.5 13.5Q4.5 4.5 13 4.5ZM9.3 11H16.8Q16.4 8.2 13 8.2Q9.8 8.2 9.3 11Z" fill="url(#ie1)"/>
<path d="M2.5 22.5Q-0.5 20 5.5 11Q12 2.5 19.5 1.2Q23.5 0.8 22.8 4.5" fill="none" stroke="#f2c53d" stroke-width="1.7"/></svg>
<svg class="a" style="left:208px;top:736px" width="25" height="25" viewBox="0 0 25 25">
<defs><linearGradient id="ed1" x1="0.2" y1="0.1" x2="0.9" y2="0.8"><stop offset="0" stop-color="#2bb1d8"/><stop offset=".55" stop-color="#2fc2a8"/><stop offset="1" stop-color="#5ad65a"/></linearGradient>
<linearGradient id="ed2" x1="0" y1="0" x2="1" y2="1"><stop offset="0" stop-color="#1a8fe0"/><stop offset="1" stop-color="#0b4fa8"/></linearGradient></defs>
<path d="M12.5 0.5Q22 0.5 24.3 9.5Q25 14.5 21 16Q17.5 17 16 14.5Q17.5 11 14 8.5Q9 6 4 9Q1.5 11 0.7 14Q0.5 2 12.5 0.5Z" fill="url(#ed1)"/>
<path d="M0.7 14Q1.5 9 6.5 7.5Q12 6.5 15 9Q17 11 16 14.5H9.5Q7.5 17 10 20Q13 23.5 19 22Q16 24.5 12.5 24.5Q1 24 0.7 14Z" fill="url(#ed2)"/>
<path d="M9.5 14.5Q8.5 18.5 12 21Q15 23 19 22Q23 20 23.5 16.5Q20 18.5 16.5 17Q14.5 16 13.8 14.5Z" fill="#1166c7"/></svg>
<svg class="a" style="left:257px;top:736px" width="27" height="26" viewBox="0 0 27 26">
<circle cx="12.5" cy="12.5" r="12" fill="#34a853"/><path d="M22.9 6.5A12 12 0 0 1 12.5 24.5L17.7 15.5A6 6 0 0 0 17.7 9.5Z" fill="#fbbc05"/><path d="M2.1 6.5A12 12 0 0 1 22.9 6.5H12.5A6 6 0 0 0 7.3 9.5Z" fill="#ea4335"/>
<circle cx="12.5" cy="12.5" r="5.6" fill="#fff"/><circle cx="12.5" cy="12.5" r="4.4" fill="#3b78e7"/>
<circle cx="19" cy="18.5" r="6.8" fill="#d6e4fb" stroke="#3a78e0" stroke-width="1.3"/><circle cx="19" cy="16.8" r="1.9" fill="none" stroke="#3a78e0" stroke-width="1.3"/><path d="M15.5 22Q19 19 22.5 22" fill="none" stroke="#3a78e0" stroke-width="1.3"/></svg>
<div class="r" style="left:250px;top:766px;width:40px;height:2px;background:#76b9ed;"></div>
<svg class="a" style="left:306px;top:736px" width="26" height="24" viewBox="0 0 26 24">
<defs><linearGradient id="ol1" x1="0" y1="0" x2="0" y2="1"><stop offset="0" stop-color="#0a6fc8"/><stop offset="1" stop-color="#28a8ea"/></linearGradient></defs>
<path d="M7 9.5L16 1.5L25 9.5V21.5Q25 23 23.5 23H8.5Q7 23 7 21.5Z" fill="url(#ol1)"/><path d="M14 9.5L25 9.5V14L17 18Z" fill="#1d6fd0"/><path d="M7 13L16 18.5L25 13V21.5Q25 23 23.5 23H8.5Q7 23 7 21.5Z" fill="#50d0f5"/>
<rect x="0.5" y="5.5" width="13.5" height="13.5" rx="1.3" fill="#1272d0"/><ellipse cx="7.25" cy="12.25" rx="3.3" ry="3.8" fill="none" stroke="#fff" stroke-width="1.8"/></svg>
<svg class="a" style="left:357px;top:737px" width="21" height="21" viewBox="0 0 21 21">
<rect x="0" y="0" width="21" height="21" rx="3.5" fill="#b30b00"/><path d="M10.2 4Q8.8 4.5 10 8.5Q11.5 12 15.5 13.5Q17.5 14 16.2 14.8Q13 15 9.5 13.5Q6 14.5 4.2 16.5Q3.3 17 4.3 15.5Q6.5 12.5 8.5 10Q10.2 6.5 10.2 4Z" fill="none" stroke="#fff" stroke-width="1.2" stroke-linejoin="round"/></svg>
<div class="r" style="left:393px;top:728px;width:48px;height:40px;background:#575c5c;"></div>
<svg class="a" style="left:405px;top:735px" width="24" height="25" viewBox="0 0 24 25">
<defs><radialGradient id="ff1" cx=".3" cy=".8" r=".9"><stop offset="0" stop-color="#ff2f5a"/><stop offset=".45" stop-color="#ff6a35"/><stop offset="1" stop-color="#ffb33a"/></radialGradient>
<linearGradient id="ff2" x1="0" y1="0" x2="1" y2="1"><stop offset="0" stop-color="#ffe14a"/><stop offset="1" stop-color="#ff9a2a"/></linearGradient></defs>
<path d="M12 24.5Q1 24.5 0.8 13.5Q1 8 4 5Q4 9 6 10Q8 5 13 4Q11 2 12.5 0.5Q16 3 19 5Q23.5 9 23.3 13.5Q23 24.5 12 24.5Z" fill="url(#ff1)"/>
<path d="M12.5 0.5Q16 3 19 5Q23.5 9 23.3 13.5Q22 8 17 7Q15 4 12.5 0.5Z" fill="url(#ff2)"/>
<circle cx="13" cy="13.5" r="5.3" fill="#7542e5"/><path d="M6.5 11Q9.5 6.5 15 8.5Q11.5 9 10.5 12Q9 13 6.5 11Z" fill="#ff8a3a"/><path d="M8 17Q12 21 17 18Q13 19.5 10.5 17Z" fill="#ff4f5e"/></svg>
<div class="r" style="left:393px;top:766px;width:48px;height:2px;background:#76b9ed;"></div>
<svg class="a" style="left:454px;top:736px" width="24" height="24" viewBox="0 0 24 24">
<defs><linearGradient id="sc1" x1="0" y1="0" x2="0" y2="1"><stop offset="0" stop-color="#2f44d0"/><stop offset="1" stop-color="#1a2690"/></linearGradient></defs>
<rect x="0" y="0" width="24" height="24" rx="3.5" fill="url(#sc1)"/><path d="M4 3.5H20L18.5 6.5H5.5Z" fill="#e8e8f0"/><path d="M5.5 6.5H18.5L19.5 7.5H4.5Z" fill="#b9bfd8"/>
<path d="M6.5 9.5H17.5L20 17.5H4Z" fill="#fff"/><path d="M7.2 14.5L17.5 10.5L18.7 14.5Z" fill="#1f3ab8"/><path d="M4 17.5H20V19.5H4Z" fill="#fff"/></svg>
<div class="r" style="left:446px;top:766px;width:40px;height:2px;background:#76b9ed;"></div>
<svg class="a" style="left:504px;top:738px" width="23" height="20" viewBox="0 0 23 20">
<path d="M0 2Q0 0.5 1.5 0.5H8L10 2.5H21.5Q23 2.5 23 4V18Q23 19.5 21.5 19.5H1.5Q0 19.5 0 18Z" fill="#e8a93a"/><path d="M0 5H23V18Q23 19.5 21.5 19.5H1.5Q0 19.5 0 18Z" fill="#fcd469"/>
<path d="M5.5 19.5V14.5Q5.5 12 8 12H15Q17.5 12 17.5 14.5V19.5H14.5V15.2H8.5V19.5Z" fill="#2f8fe0"/></svg>
<div class="r" style="left:495px;top:766px;width:40px;height:2px;background:#76b9ed;"></div>
<svg class="a" style="left:551px;top:736px" width="26" height="23" viewBox="0 0 26 23">
<path d="M7 1H24Q25.5 1 25.5 2.5V20.5Q25.5 22 24 22H7Z" fill="#2b7cd3"/><path d="M7 1H25.5V6H7Z" fill="#41a5ee"/><path d="M7 11.5H25.5V16.5H7Z" fill="#185abd"/><path d="M7 16.5H25.5V20.5Q25.5 22 24 22H7Z" fill="#103f91"/>
<rect x="0" y="5" width="13" height="13" rx="1.2" fill="#185abd"/><path d="M2 8L3.6 15H4.8L6.5 10L8.2 15H9.4L11 8H9.8L8.8 12.8L7.1 8H5.9L4.2 12.8L3.2 8Z" fill="#fff"/></svg>
<div class="r" style="left:544px;top:766px;width:40px;height:2px;background:#76b9ed;"></div>
<svg class="a" style="left:1122px;top:743px" width="14" height="9" viewBox="0 0 14 9" fill="none" stroke="#fff" stroke-width="1.3"><path d="M1 8L7 2L13 8"/></svg>
<svg class="a" style="left:1144px;top:740px" width="18" height="15" viewBox="0 0 18 15" fill="none" stroke="#fff" stroke-width="1.1"><path d="M1 5H4L8 1.5V13.5L4 10H1Z"/><path d="M10.5 5Q12 7.5 10.5 10M12.8 3.5Q15 7.5 12.8 11.5M15 2Q18 7.5 15 13"/></svg>
<svg class="a" style="left:1171px;top:742px" width="14" height="13" viewBox="0 0 14 13" fill="none" stroke="#fff" stroke-width="1.1"><path d="M1 5.5Q6.5 0 12 2M2.5 8Q6.5 3.5 10.5 5M4 10.5Q6.5 7 9 8"/><circle cx="10" cy="10.5" r="1.6" fill="#fff" stroke="none"/></svg>
<svg class="a" style="left:1195px;top:739px" width="13" height="18" viewBox="0 0 13 18" fill="none" stroke="#fff" stroke-width="1.1"><path d="M2 3.5Q6.5 0 11 3.5M2 14.5Q6.5 18 11 14.5"/><rect x="1" y="5.5" width="7" height="7" rx="1"/><path d="M8 8L12 6V12L8 10"/></svg>
<div class="t " style="left:1221.50px;top:739.84px;font-size:12px;line-height:16px;color:#fff;font-weight:400;transform:scaleX(0.76);transform-origin:0 0;">ESP</div>
<div class="t " style="left:1270.00px;top:731.52px;font-size:11.5px;line-height:15px;color:#fff;font-weight:400;transform:scaleX(0.93);transform-origin:0 0;">8:32</div>
<div class="t " style="left:1255.80px;top:749.52px;font-size:11.5px;line-height:15px;color:#fff;font-weight:400;transform:scaleX(0.99);transform-origin:0 0;">18/9/2025</div>
<svg class="a" style="left:1323px;top:739px" width="28" height="27" viewBox="0 0 28 27"><path d="M1.5 1.5H18.5V13.5H8L4 17V13.5H1.5Z" fill="#fff"/><path d="M4.5 5H15.5M4.5 8H15.5M4.5 11H11" stroke="#1e2a2b" stroke-width="1"/><circle cx="17.5" cy="16" r="7.5" fill="#2e3436" stroke="#8a9090" stroke-width="1"/></svg>
<div class="t " style="left:1336.50px;top:749.69px;font-size:11px;line-height:14px;color:#fff;font-weight:700;">4</div>
<div class="r" style="left:1361px;top:728px;width:1px;height:40px;background:#7a8285;"></div>
</body></html>
